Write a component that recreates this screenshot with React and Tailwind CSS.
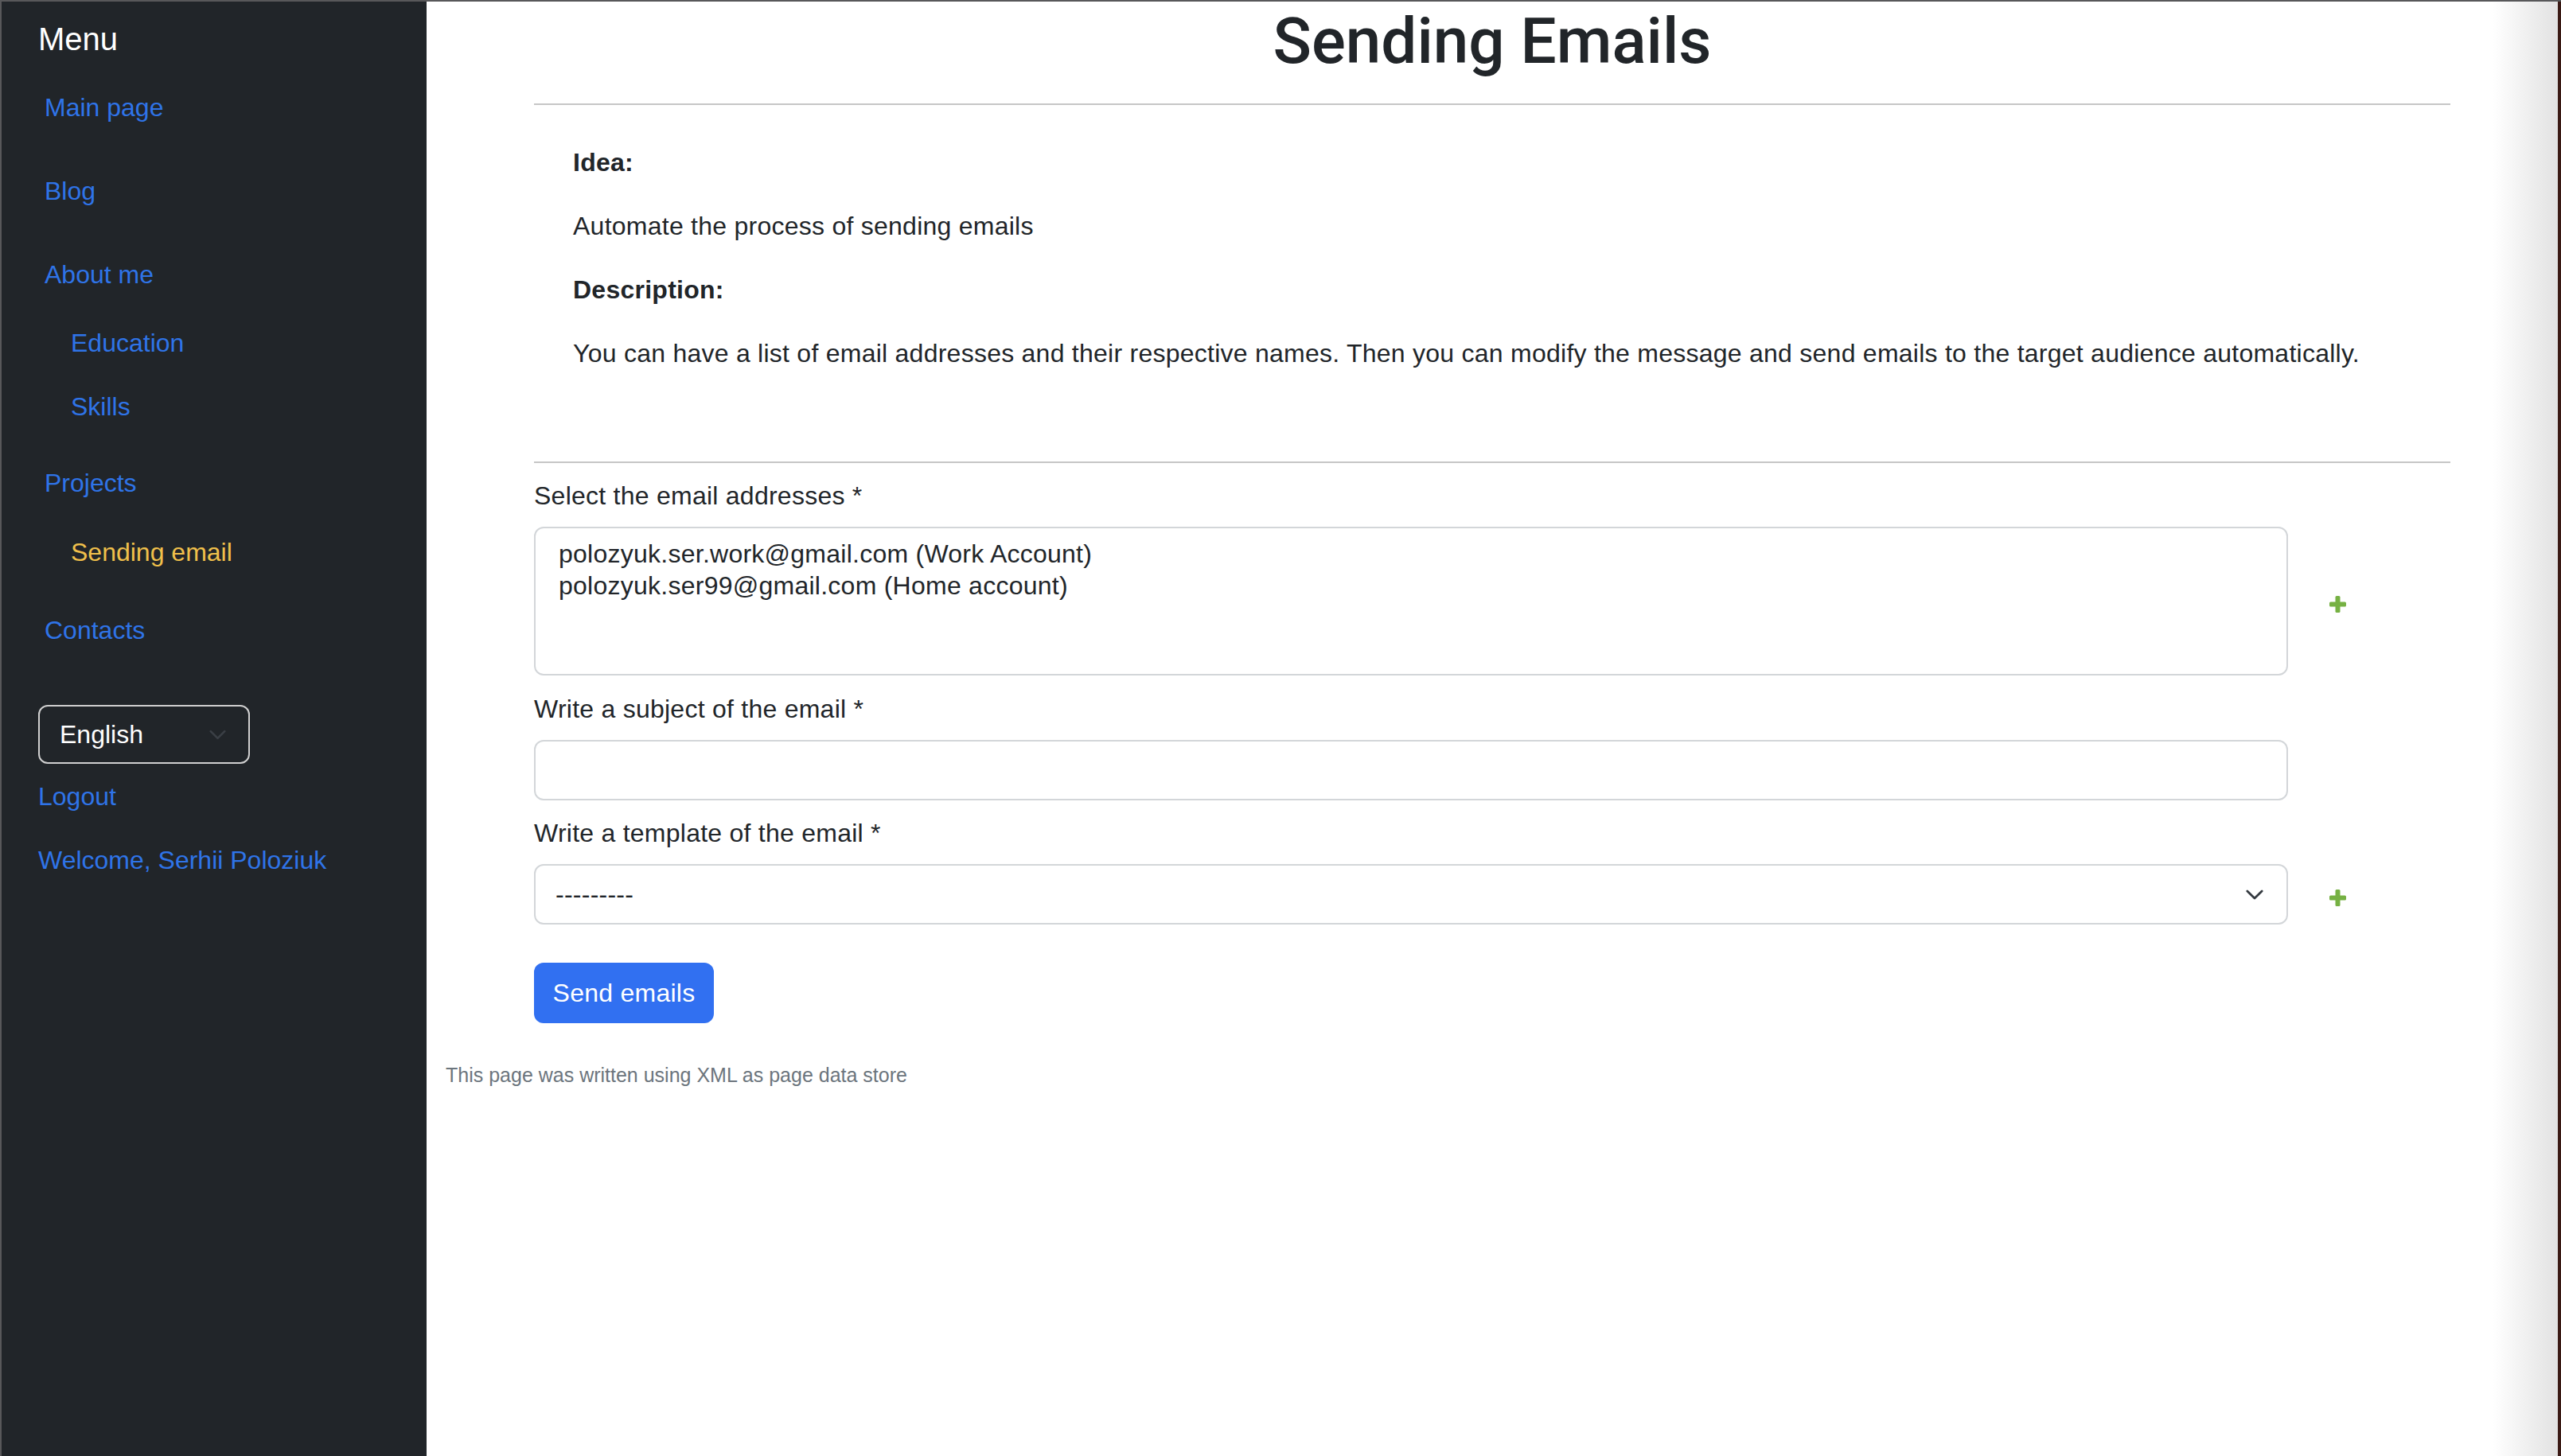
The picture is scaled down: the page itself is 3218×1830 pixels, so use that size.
import React from "react";

const Chevron = ({ className, color }) => (
	<svg className={className} width="24" height="14" viewBox="0 0 24 14" fill="none">
		<path d="M2 2l10 10 10-10" stroke={color} strokeWidth="3" strokeLinecap="round" strokeLinejoin="round" />
	</svg>
);

const Plus = () => (
	<svg width="21" height="21" viewBox="0 0 21 21">
		<rect x="7.5" y="0" width="6" height="21" rx="1.5" fill="#76b143" />
		<rect x="0" y="7.5" width="21" height="6" rx="1.5" fill="#76b143" />
	</svg>
);

function Sidebar() {
	return (
		<aside className="w-[534px] shrink-0 bg-[#212529] pl-[46px] text-[32px] leading-[48px]">
			<div className="mt-[23px] text-[40px] text-white">Menu</div>
			<div className="mt-[38px] pl-[8px] text-[#2f74e8]">Main page</div>
			<div className="mt-[57px] pl-[8px] text-[#2f74e8]">Blog</div>
			<div className="mt-[57px] pl-[8px] text-[#2f74e8]">About me</div>
			<div className="mt-[38px] pl-[41px] text-[#2f74e8]">Education</div>
			<div className="mt-[32px] pl-[41px] text-[#2f74e8]">Skills</div>
			<div className="mt-[48px] pl-[8px] text-[#2f74e8]">Projects</div>
			<div className="mt-[39px] pl-[41px] text-[#f0c04b]">Sending email</div>
			<div className="mt-[50px] pl-[8px] text-[#2f74e8]">Contacts</div>
			<div className="mt-[70px] flex h-[74px] w-[266px] items-center justify-between rounded-[12px] border-2 border-[#d0d0d0] pl-[25px] pr-[28px] text-white">
				<span>English</span>
				<Chevron className="h-[13px] w-[21px]" color="#3a3f45" />
			</div>
			<div className="mt-[17px] text-[#2f74e8]">Logout</div>
			<div className="mt-[32px] text-[#2f74e8]">Welcome, Serhii Poloziuk</div>
		</aside>
	);
}

function FormRow({ children, plus }) {
	return (
		<div className="flex items-center">
			<div className="w-[2204px] shrink-0">{children}</div>
			<div className="flex w-[124px] justify-center pt-[8px]">{plus && <Plus />}</div>
		</div>
	);
}

export default function App() {
	return (
		<div className="flex h-[1830px] w-full border-t-2 border-l-2 border-[#58585a] font-['Liberation_Sans',Arial,sans-serif] text-[#212529]">
			<Sidebar />
			<main className="flex flex-1 flex-col border-r-4 border-[#3a1a15] bg-[linear-gradient(to_right,#ffffff_calc(100%-82px),#e2e2e2)]">
				<div className="px-[135px]">
					<h1 className="mt-[2px] text-center font-['Roboto',sans-serif] text-[80px] leading-[96px] font-medium">Sending Emails</h1>
					<hr className="mt-[30px] border-0 border-t-2 border-[#c6c6c6]" />

					<div className="px-[49px] pt-[48px] text-[32px] leading-[48px] tracking-[0.25px]">
						<p className="mb-[32px] font-bold">Idea:</p>
						<p className="mb-[32px]">Automate the process of sending emails</p>
						<p className="mb-[32px] font-bold">Description:</p>
						<p>
							You can have a list of email addresses and their respective names. Then you can modify the message and send emails to the target audience automatically.
						</p>
					</div>
					<hr className="mt-[112px] border-0 border-t-2 border-[#c6c6c6]" />

					<form className="text-[32px] leading-[48px] tracking-[0.25px]">
						<label className="mt-[17px] block">Select the email addresses *</label>
						<div className="mt-[15px]">
							<FormRow plus>
								<div className="h-[187px] rounded-[12px] border-2 border-[#d3d6d9] bg-white pt-[12px] pl-[29px] leading-[40px]">
									<div>polozyuk.ser.work@gmail.com (Work Account)</div>
									<div>polozyuk.ser99@gmail.com (Home account)</div>
								</div>
							</FormRow>
						</div>

						<label className="mt-[18px] block">Write a subject of the email *</label>
						<div className="mt-[15px]">
							<FormRow>
								<div className="h-[76px] rounded-[12px] border-2 border-[#d3d6d9] bg-white"></div>
							</FormRow>
						</div>

						<label className="mt-[17px] block">Write a template of the email *</label>
						<div className="mt-[15px]">
							<FormRow plus>
								<div className="flex h-[76px] items-center justify-between rounded-[12px] border-2 border-[#d3d6d9] bg-white pl-[25px] pr-[29px]">
									<span>---------</span>
									<Chevron className="h-[13px] w-[22px]" color="#343a40" />
								</div>
							</FormRow>
						</div>

						<button
							type="button"
							className="mt-[48px] h-[76px] w-[226px] rounded-[12px] bg-[#3170f1] text-[32px] text-white"
						>
							Send emails
						</button>
					</form>
				</div>

				<footer className="mt-[47px] pl-[24px] text-[25px] leading-[36px] text-[#6c757d]">
					This page was written using XML as page data store
				</footer>
			</main>
		</div>
	);
}
